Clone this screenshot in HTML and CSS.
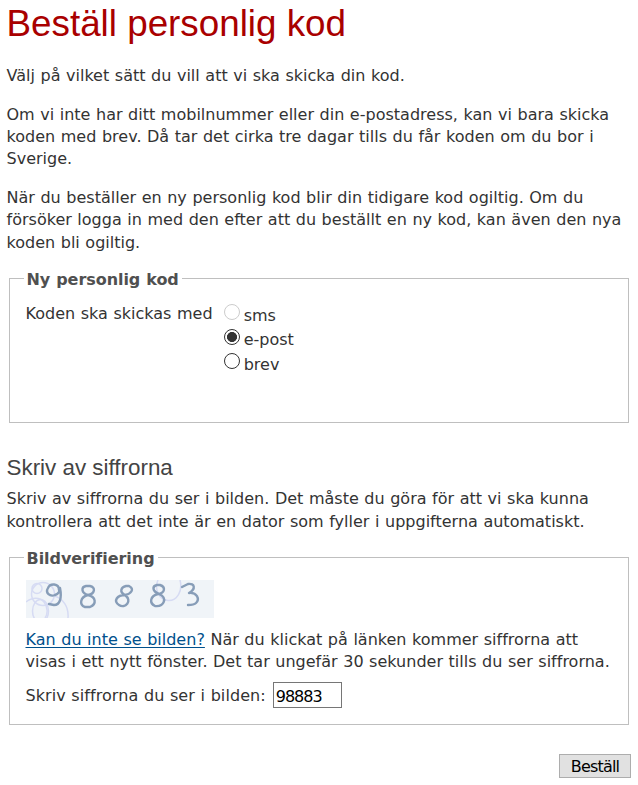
FILE: index.html
```html
<!DOCTYPE html>
<html lang="sv">
<head>
<meta charset="utf-8">
<title>Beställ personlig kod</title>
<link rel="stylesheet" href="styles.css">
</head>
<body>
<main>
<h1>Beställ personlig kod</h1>
<p>Välj på vilket sätt du vill att vi ska skicka din kod.</p>
<p>Om vi inte har ditt mobilnummer eller din e-postadress, kan vi bara skicka<br>koden med brev. Då tar det cirka tre dagar tills du får koden om du bor i<br>Sverige.</p>
<p>När du beställer en ny personlig kod blir din tidigare kod ogiltig. Om du<br>försöker logga in med den efter att du beställt en ny kod, kan även den nya<br>koden bli ogiltig.</p>
<form>
<fieldset class="delivery">
<legend><span>Ny personlig kod</span></legend>
<div class="choice">
<span class="choice-label">Koden ska skickas med</span>
<div class="options">
<label><input type="radio" name="via" disabled><span>sms</span></label>
<label><input type="radio" name="via" checked><span>e-post</span></label>
<label><input type="radio" name="via"><span>brev</span></label>
</div>
</div>
</fieldset>
<h2>Skriv av siffrorna</h2>
<p class="intro">Skriv av siffrorna du ser i bilden. Det måste du göra för att vi ska kunna<br>kontrollera att det inte är en dator som fyller i uppgifterna automatiskt.</p>
<fieldset class="verify">
<legend><span>Bildverifiering</span></legend>
<svg class="code-image" width="188" height="38" viewBox="0 0 188 38">
<rect width="188" height="38" fill="#f0f4f8"/>
<g fill="none" stroke="#d6dbf3" stroke-width="1.5">
<circle cx="11" cy="8.500" r="5"/>
<circle cx="17" cy="14" r="11.500"/>
<ellipse cx="14.500" cy="31" rx="8" ry="11.500"/>
<path d="M0 22C6 17 14 17 18 22C22 27 22 34 19 38M28 16C37 18 43 27 42 38"/>
<path d="M132 0C128 9 133 20 142 20.500C151 21 157 11 154 0"/>
</g>
<g fill="none" stroke="#879db8" stroke-width="2.400" stroke-linecap="round" stroke-linejoin="round">
<path d="M33 10C33 3 24 3 22 8C19 13 24 17 29 15C32 14 34 12 34 8C36 18 34 25 28 25L23 24"/>
<path d="M62 15C55 13 55 7 60 6H64C70 7 69 14 62 15C54 17 53 25 59 27H64C71 24 70 17 62 15Z"/>
<path d="M99 15C93 12 95 7 100 6L103 6C109 9 105 14 99 15C91 15 87 21 93 25C99 29 107 21 99 15Z"/>
<path d="M133 14C126 11 126 6 131 5H134C140 7 139 13 132 14C124 16 123 23 129 26C138 27 142 18 133 14Z"/>
<path d="M156 7L162 4C169 3 170 9 163 13C171 12 174 19 170 23C168 25 165 25 162 25"/>
</g>
</svg>
<p class="help"><a href="#">Kan du inte se bilden?</a> När du klickat på länken kommer siffrorna att<br>visas i ett nytt fönster. Det tar ungefär 30 sekunder tills du ser siffrorna.</p>
<div class="answer"><label for="digits">Skriv siffrorna du ser i bilden:</label><input id="digits" type="text" value="98883"></div>
</fieldset>
<div class="actions"><button type="button">Beställ</button></div>
</form>
</main>
</body>
</html>
```
FILE: styles.css
```css
* { box-sizing: border-box; }
body {
  margin: 0;
  background: #fff;
  color: #333;
  font: 16px/22.4px "DejaVu Sans", sans-serif;
  letter-spacing: 0.01px;
  word-spacing: 0.45px;
}
main { padding: 3px 7px 0 6.5px; white-space: nowrap; }
h1, h2 { font-family: "Liberation Sans", sans-serif; font-weight: 400; letter-spacing: 0; word-spacing: 0; margin: 0; }
h1 { color: #a90000; font-size: 36.8px; line-height: 42px; margin-bottom: 20px; }
h2 { color: #444; font-size: 22.4px; line-height: 28px; margin-top: 31px; }
p { margin: 0 0 16.2px; }
form { margin-top: -3px; }
fieldset {
  margin: 0 2px;
  padding: 0 16px;
  border: 1px solid #bfbfbf;
  min-width: 0;
}
legend { color: #505050; font-weight: 700; padding: 0 3px; margin-left: -2px; letter-spacing: -0.05px; }
legend span { display: block; padding-top: 2px; margin-bottom: -2px; }
.delivery { height: 156px; }
.choice { display: flex; gap: 11px; padding-top: 13px; }
.options { display: flex; flex-direction: column; gap: 2px; padding-top: 1px; }
.options label { display: flex; gap: 4px; }
.options span { padding-top: 1px; margin-bottom: -1px; }
input[type="radio"] {
  appearance: none;
  width: 16px;
  height: 16px;
  margin: 0.5px 0 0;
  border: 1px solid #333;
  border-radius: 50%;
}
input[type="radio"]:checked { background: radial-gradient(circle, #333 4.7px, #fff 5.3px); }
input[type="radio"]:disabled { border-color: #ccc; }
.intro { margin: 6px 0 13px; }
.verify { height: 179px; }
.code-image { display: block; margin-top: 11px; }
.help { margin: 11px 0 9px; }
a { color: #00508c; text-underline-offset: 2px; text-decoration-thickness: 1px; }
.answer { display: flex; align-items: center; gap: 7px; }
.answer label { padding-top: 2px; letter-spacing: 0.07px; }
.answer input {
  width: 69px;
  height: 26px;
  padding: 2px 2px 0;
  border: 1px solid #767676;
  color: #000;
  font: 16px "DejaVu Sans", sans-serif;
  letter-spacing: -1px;
}
.actions { display: flex; justify-content: flex-end; margin-top: 29px; }
button {
  width: 72px;
  height: 24px;
  padding: 0;
  border: 1px solid #adadad;
  background: #e1e1e1;
  color: #000;
  font: 16px "DejaVu Sans", sans-serif;
  letter-spacing: -0.8px;
}
```
